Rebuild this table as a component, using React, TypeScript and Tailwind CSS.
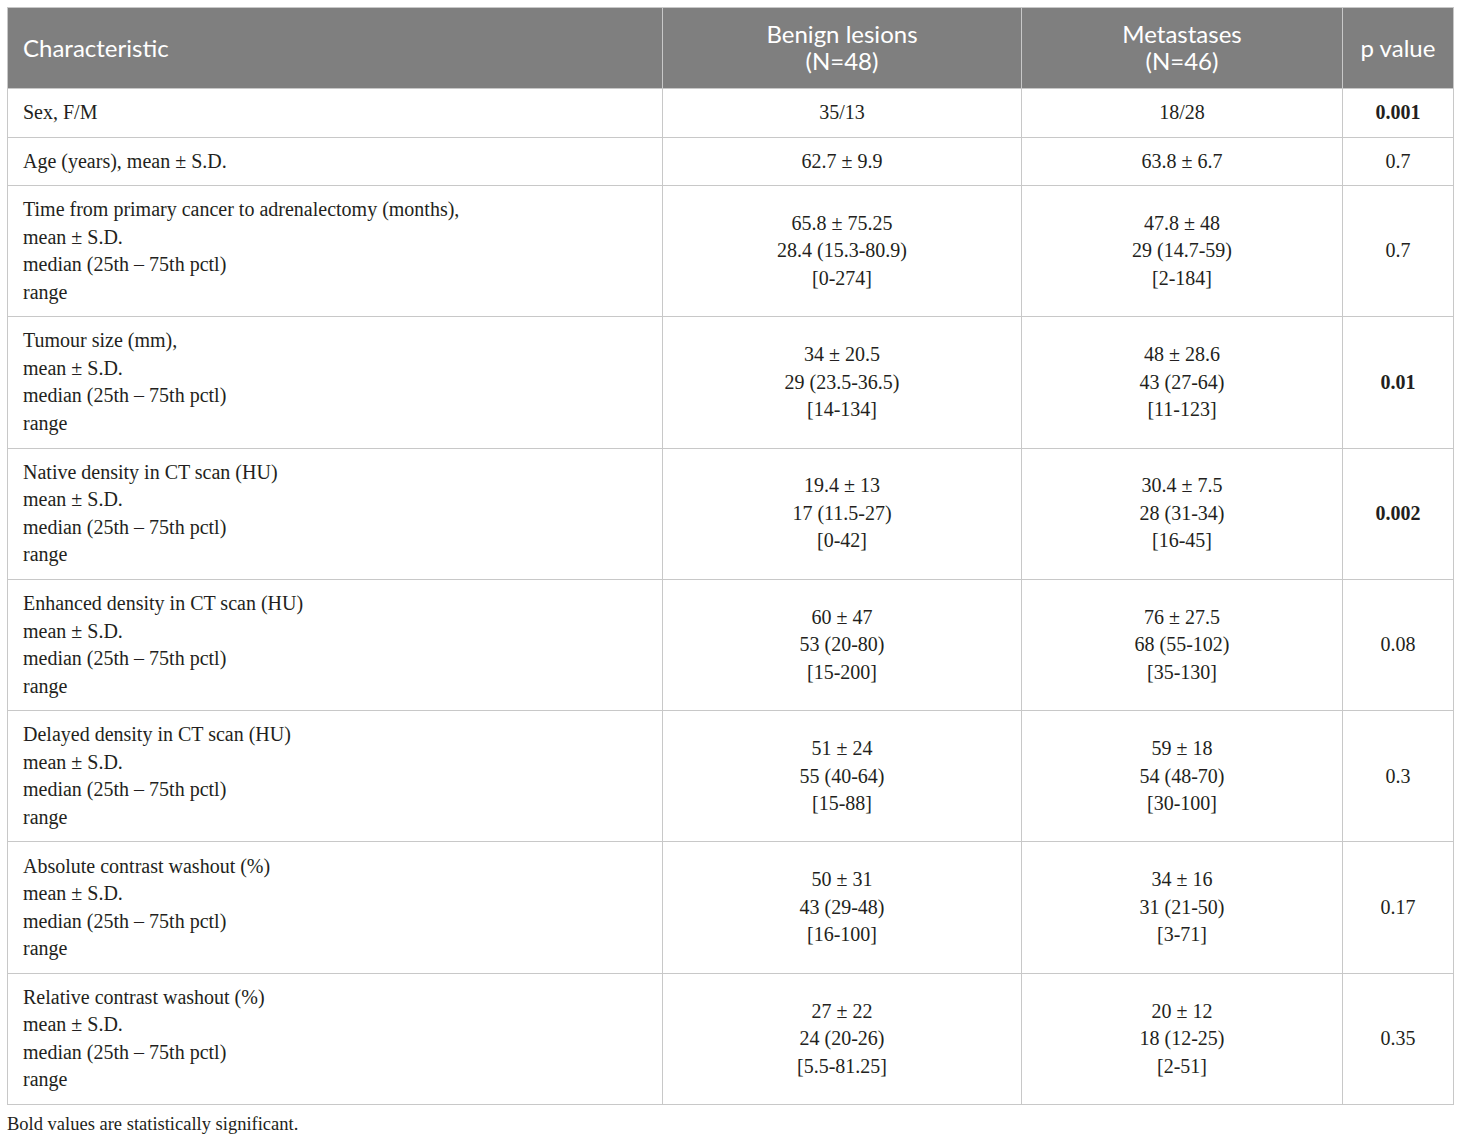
import React from 'react';

const rows = [
  { label: ['Sex, F/M'], benign: ['35/13'], meta: ['18/28'], p: '0.001', bold: true },
  { label: ['Age (years), mean ± S.D.'], benign: ['62.7 ± 9.9'], meta: ['63.8 ± 6.7'], p: '0.7' },
  { label: ['Time from primary cancer to adrenalectomy (months),', 'mean ± S.D.', 'median (25th – 75th pctl)', 'range'], benign: ['65.8 ± 75.25', '28.4 (15.3-80.9)', '[0-274]'], meta: ['47.8 ± 48', '29 (14.7-59)', '[2-184]'], p: '0.7' },
  { label: ['Tumour size (mm),', 'mean ± S.D.', 'median (25th – 75th pctl)', 'range'], benign: ['34 ± 20.5', '29 (23.5-36.5)', '[14-134]'], meta: ['48 ± 28.6', '43 (27-64)', '[11-123]'], p: '0.01', bold: true },
  { label: ['Native density in CT scan (HU)', 'mean ± S.D.', 'median (25th – 75th pctl)', 'range'], benign: ['19.4 ± 13', '17 (11.5-27)', '[0-42]'], meta: ['30.4 ± 7.5', '28 (31-34)', '[16-45]'], p: '0.002', bold: true },
  { label: ['Enhanced density in CT scan (HU)', 'mean ± S.D.', 'median (25th – 75th pctl)', 'range'], benign: ['60 ± 47', '53 (20-80)', '[15-200]'], meta: ['76 ± 27.5', '68 (55-102)', '[35-130]'], p: '0.08' },
  { label: ['Delayed density in CT scan (HU)', 'mean ± S.D.', 'median (25th – 75th pctl)', 'range'], benign: ['51 ± 24', '55 (40-64)', '[15-88]'], meta: ['59 ± 18', '54 (48-70)', '[30-100]'], p: '0.3' },
  { label: ['Absolute contrast washout (%)', 'mean ± S.D.', 'median (25th – 75th pctl)', 'range'], benign: ['50 ± 31', '43 (29-48)', '[16-100]'], meta: ['34 ± 16', '31 (21-50)', '[3-71]'], p: '0.17' },
  { label: ['Relative contrast washout (%)', 'mean ± S.D.', 'median (25th – 75th pctl)', 'range'], benign: ['27 ± 22', '24 (20-26)', '[5.5-81.25]'], meta: ['20 ± 12', '18 (12-25)', '[2-51]'], p: '0.35' },
];

const Lines = ({ items }: { items: string[] }) => (
  <>
    {items.map((t, i) => (
      <div key={i}>{t}</div>
    ))}
  </>
);

export default function App() {
  return (
    <div className="bg-white w-[1460px] h-[1142px] pt-[7px] pl-[7px]" style={{ fontFamily: '"Liberation Serif", serif' }}>
      <table className="border-collapse table-fixed w-[1446px] text-[20px] leading-[27.5px] text-[#231f20]">
        <colgroup>
          <col className="w-[655px]" />
          <col className="w-[359px]" />
          <col className="w-[321px]" />
          <col className="w-[111px]" />
        </colgroup>
        <thead>
          <tr className="bg-[#7f7f7f] text-white h-[81px] text-[24px] leading-[27px]" style={{ fontFamily: 'Lato, "Open Sans", sans-serif' }}>
            <th className="border border-[#c8c8c8] text-left font-normal px-[15px] pb-[2px]">Characteristic</th>
            <th className="border border-[#c8c8c8] font-normal pb-[2px]">
              <div>Benign lesions</div>
              <div>(N=48)</div>
            </th>
            <th className="border border-[#c8c8c8] font-normal pb-[2px]">
              <div>Metastases</div>
              <div>(N=46)</div>
            </th>
            <th className="border border-[#c8c8c8] font-normal pb-[2px]">p value</th>
          </tr>
        </thead>
        <tbody>
          {rows.map((r, i) => (
            <tr key={i} className={r.label.length > 1 ? 'h-[131.3px]' : 'h-[47px]'}>
              <td className="border border-[#c8c8c8] px-[15px] py-[10px] align-middle">
                <Lines items={r.label} />
              </td>
              <td className="border border-[#c8c8c8] text-center align-middle">
                <Lines items={r.benign} />
              </td>
              <td className="border border-[#c8c8c8] text-center align-middle">
                <Lines items={r.meta} />
              </td>
              <td className={'border border-[#c8c8c8] text-center align-middle ' + (r.bold ? 'font-bold' : '')}>{r.p}</td>
            </tr>
          ))}
        </tbody>
      </table>
      <div className="text-[18.5px] text-[#231f20] mt-[6px]">Bold values are statistically significant.</div>
    </div>
  );
}
